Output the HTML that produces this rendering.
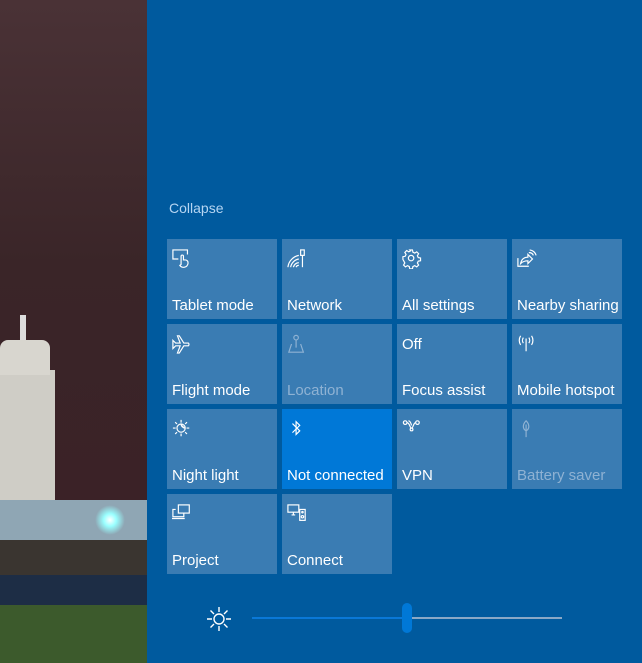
<!DOCTYPE html>
<html><head><meta charset="utf-8"><style>
body{margin:0;width:642px;height:663px;overflow:hidden;font-family:"Liberation Sans",sans-serif;position:relative;background:#005a9e}
#photo{position:absolute;left:0;top:0;width:147px;height:663px;background:linear-gradient(#4a3236,#3a2528 40%,#3b2227 75%,#2c2a35);overflow:hidden}
#panel{position:absolute;left:147px;top:0;width:495px;height:663px;background:#005a9e}
.t{position:absolute;width:110px;height:80px;background:#3a7cb3;color:#fff;font-size:15px}
.t span{position:absolute;left:5px;bottom:5px;white-space:nowrap}
.t svg{position:absolute;left:5px;top:10px}
.dim{color:#8fb2d3}
.on{background:#0078d7}
</style></head><body>
<div id="photo">
 <div style="position:absolute;left:0;top:370px;width:55px;height:230px;background:#cfcdc6"></div>
 <div style="position:absolute;left:20px;top:315px;width:6px;height:30px;background:#ddd"></div>
 <div style="position:absolute;left:0;top:340px;width:50px;height:35px;background:#d8d6cf;border-radius:8px 8px 0 0"></div>
 <div style="position:absolute;left:0;top:500px;width:147px;height:60px;background:#8fa6b4"></div>
 <div style="position:absolute;left:95px;top:505px;width:30px;height:30px;background:radial-gradient(#fff,#9ff 30%,rgba(100,220,255,0) 70%)"></div>
 <div style="position:absolute;left:0;top:540px;width:147px;height:40px;background:#3a3530"></div>
 <div style="position:absolute;left:0;top:575px;width:147px;height:35px;background:#1d2d45"></div>
 <div style="position:absolute;left:0;top:605px;width:147px;height:58px;background:#3c5a2c"></div>
</div>
<div id="panel"></div>
<div style="position:absolute;left:169px;top:200px;color:#b5d5f2;font-size:14px">Collapse</div>

<div class="t" style="left:167px;top:239px"><svg width="20" height="20" viewBox="0 0 22 22" fill="none" stroke="#fff" stroke-width="1.3"><path d="M7 11H1V1h16v5"/><path d="M10 17V8a1.3 1.3 0 0 1 2.6 0v4h2a3 3 0 0 1 3 3v1a5 5 0 0 1-9 2z"/></svg><span>Tablet mode</span></div>
<div class="t" style="left:282px;top:239px"><svg width="20" height="20" viewBox="0 0 22 22" fill="none" stroke="#fff" stroke-width="1.3"><path d="M1 20a15 15 0 0 1 12-13M4 20a11 11 0 0 1 9-9M7 20a7 7 0 0 1 6-5M10 20a3 3 0 0 1 3-2"/><rect x="15" y="1" width="4" height="6"/><path d="M17 7v13"/></svg><span>Network</span></div>
<div class="t" style="left:397px;top:239px"><svg width="20" height="20" viewBox="0 0 22 22" fill="none" stroke="#fff" stroke-width="1.3"><circle cx="10" cy="10" r="3"/><path d="M8.5 1h3l.5 2.5 2 1 2.2-1.4 2.1 2.1-1.4 2.2 1 2 2.5.5v3l-2.5.5-1 2 1.4 2.2-2.1 2.1-2.2-1.4-2 1-.5 2.5h-3l-.5-2.5-2-1-2.2 1.4-2.1-2.1 1.4-2.2-1-2L1 11.5v-3l2.5-.5 1-2-1.4-2.2 2.1-2.1 2.2 1.4 2-1z"/></svg><span>All settings</span></div>
<div class="t" style="left:512px;top:239px"><svg width="20" height="20" viewBox="0 0 22 22" fill="none" stroke="#fff" stroke-width="1.3"><path d="M1 10v9h12"/><path d="M4 16c1-5 4-7 8-7V6l5 5-5 5v-3c-3 0-6 1-8 3z"/><path d="M13 4a5 5 0 0 1 5 3M14 1a8 8 0 0 1 7 6"/></svg><span>Nearby sharing</span></div>

<div class="t" style="left:167px;top:324px"><svg width="20" height="20" viewBox="0 0 22 22" fill="none" stroke="#fff" stroke-width="1.3"><path d="M1 7l3 3h5L6 2h2l5 8h5a2 2 0 0 1 0 3h-5l-5 8H6l3-8H4l-3 3z"/></svg><span>Flight mode</span></div>
<div class="t" style="left:282px;top:324px"><svg width="20" height="20" viewBox="0 0 22 22" fill="none" stroke="#8fb2d3" stroke-width="1.3"><circle cx="10" cy="4" r="2.5"/><path d="M10 6.5V15M5 11l-3 9h16l-3-9"/></svg><span class="dim">Location</span></div>
<div class="t" style="left:397px;top:324px"><div style="position:absolute;left:5px;top:12px">Off</div><span>Focus assist</span></div>
<div class="t" style="left:512px;top:324px"><svg width="20" height="20" viewBox="0 0 22 22" fill="none" stroke="#fff" stroke-width="1.3"><path d="M10 5v14M4 2a9 9 0 0 0 0 10M16 2a9 9 0 0 1 0 10M7 4a5 5 0 0 0 0 6M13 4a5 5 0 0 1 0 6"/></svg><span>Mobile hotspot</span></div>

<div class="t" style="left:167px;top:409px"><svg width="20" height="20" viewBox="0 0 22 22" fill="none" stroke="#fff" stroke-width="1.3"><circle cx="10" cy="10" r="4.5"/><path d="M10 1v3M10 16v3M1 10h3M16 10h3M3.5 3.5l2 2M14.5 14.5l2 2M3.5 16.5l2-2M14.5 5.5l2-2"/><path d="M10 5.5a4.5 4.5 0 0 0 4.5 4.5" fill="#fff"/></svg><span>Night light</span></div>
<div class="t on" style="left:282px;top:409px"><svg width="20" height="20" viewBox="0 0 22 22" fill="none" stroke="#fff" stroke-width="1.3"><path d="M6 5l8 8-4 4V3l4 4-8 8"/></svg><span>Not connected</span></div>
<div class="t" style="left:397px;top:409px"><svg width="20" height="20" viewBox="0 0 22 22" fill="none" stroke="#fff" stroke-width="1.3"><circle cx="3.5" cy="4" r="2"/><circle cx="17" cy="4" r="2"/><path d="M5.5 4c3 0 3 6 5 6s2-6 4.5-6M7 2c2 0 3 3 3.5 5"/><circle cx="10.5" cy="11.5" r="1.5"/></svg><span>VPN</span></div>
<div class="t" style="left:512px;top:409px"><svg width="20" height="20" viewBox="0 0 22 22" fill="none" stroke="#8fb2d3" stroke-width="1.3"><path d="M10 2c-4 4-4 9 0 11 4-2 4-7 0-11zM10 6v14"/></svg><span class="dim">Battery saver</span></div>

<div class="t" style="left:167px;top:494px"><svg width="20" height="20" viewBox="0 0 22 22" fill="none" stroke="#fff" stroke-width="1.3"><rect x="7" y="1" width="12" height="9"/><path d="M4 6H1v8h12v-4"/><path d="M0 16h14"/></svg><span>Project</span></div>
<div class="t" style="left:282px;top:494px"><svg width="20" height="20" viewBox="0 0 22 22" fill="none" stroke="#fff" stroke-width="1.3"><rect x="1" y="1" width="12" height="8"/><path d="M5 12h4M7 9v3"/><rect x="14" y="6" width="6" height="12"/><circle cx="17" cy="9" r=".8"/><circle cx="17" cy="14" r="1.3"/></svg><span>Connect</span></div>

<svg style="position:absolute;left:206px;top:606px" width="26" height="26" viewBox="0 0 26 26" fill="none" stroke="#fff" stroke-width="1.4"><circle cx="13" cy="13" r="5"/><path d="M13 1v5M13 20v5M1 13h5M20 13h5M4.5 4.5l3.5 3.5M18 18l3.5 3.5M4.5 21.5L8 18M18 8l3.5-3.5"/></svg>
<div style="position:absolute;left:252px;top:617px;width:155px;height:2px;background:#0a78d7"></div>
<div style="position:absolute;left:407px;top:617px;width:155px;height:2px;background:#8aa8c6"></div>
<div style="position:absolute;left:402px;top:603px;width:10px;height:30px;background:#0078d7;border-radius:5px"></div>
</body></html>
